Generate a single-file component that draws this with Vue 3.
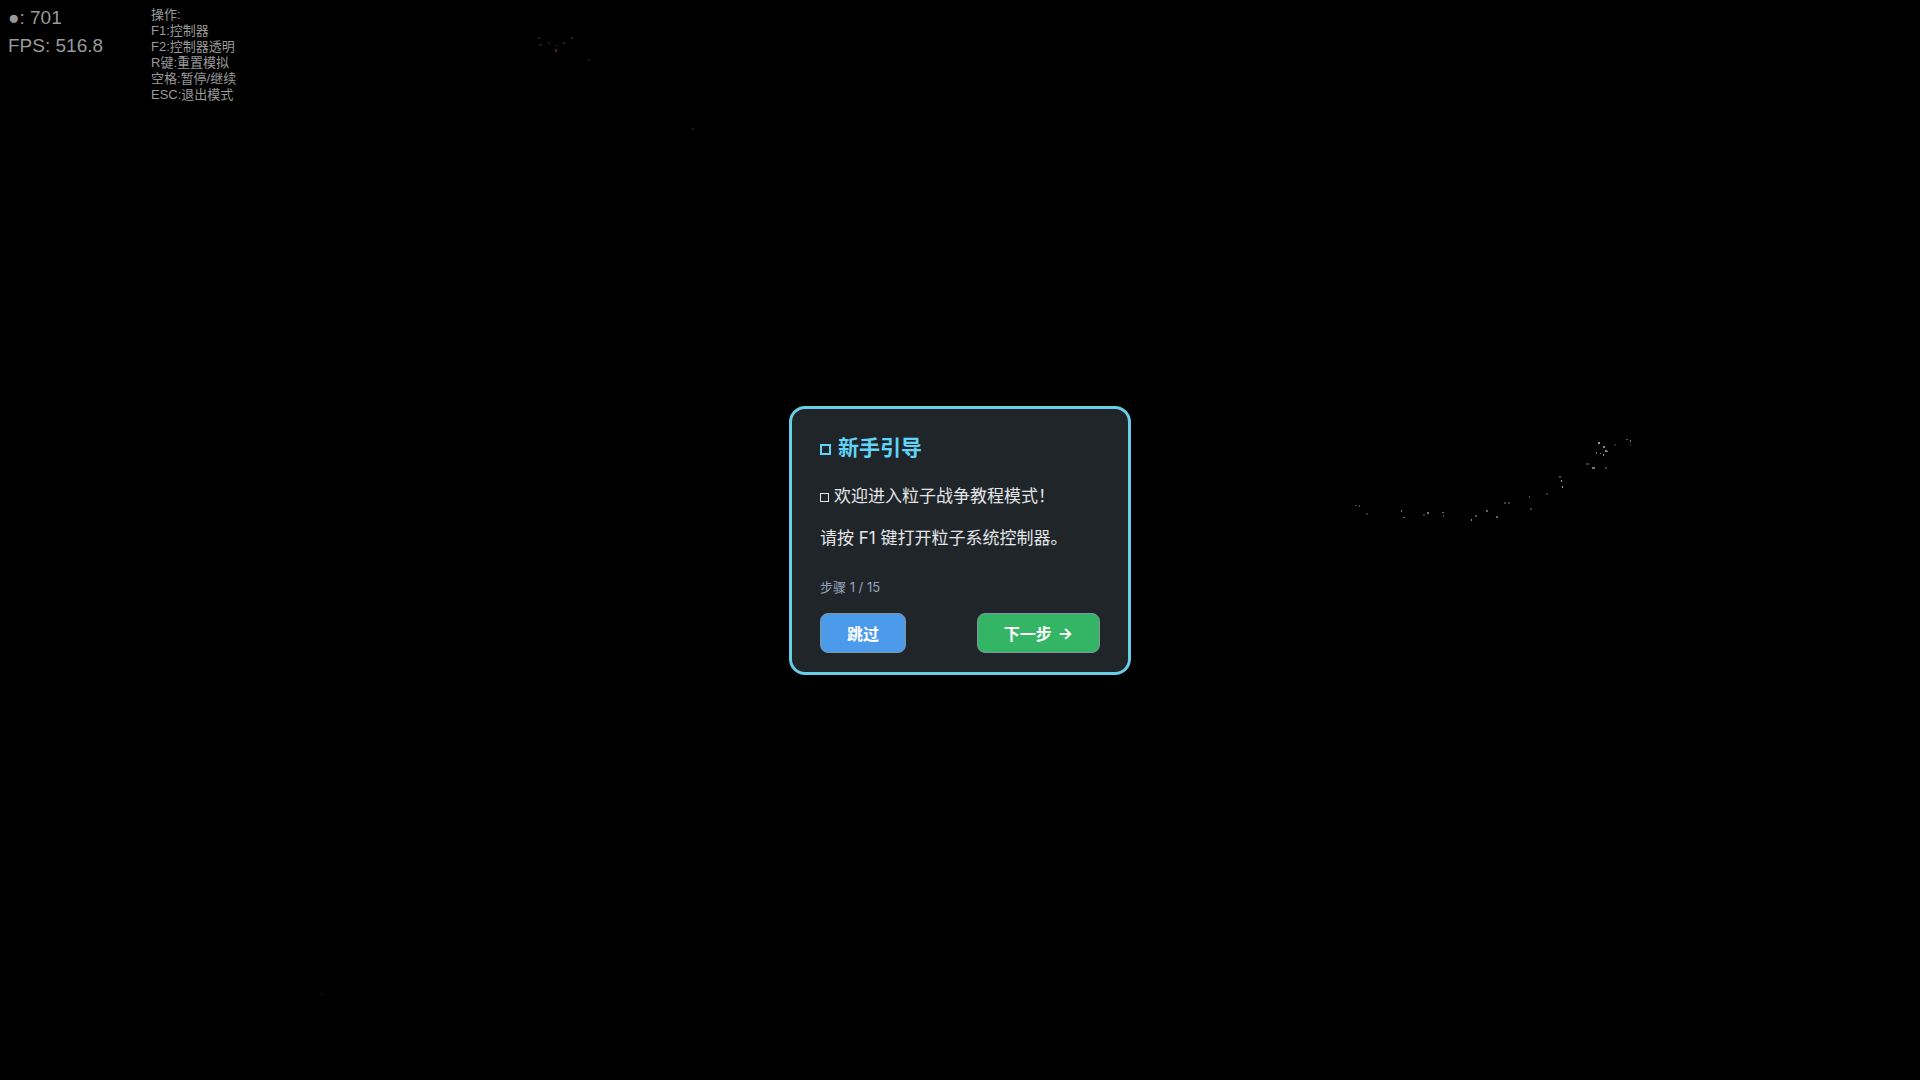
<template>
  <main class="stage">
    <svg class="particles" aria-hidden="true">
      <rect
        v-for="(p, index) in particles"
        :key="index"
        :x="p[0]"
        :y="p[1]"
        :width="p[2]"
        :height="p[3]"
        :fill="p[4]"
      />
    </svg>

    <header class="hud">
      <div class="stats">
        <div>●: {{ count }}</div>
        <div>FPS: {{ fps }}</div>
      </div>
      <div class="keys">
        <div v-for="line in keys" :key="line">{{ line }}</div>
      </div>
    </header>

    <section class="guide" v-if="visible">
      <h2 class="title"><span class="box"></span>新手引导</h2>
      <p class="text"><span class="box"></span>欢迎进入粒子战争教程模式！</p>
      <p class="text">请按 F1 键打开粒子系统控制器。</p>
      <div class="step">步骤 {{ step }} / {{ total }}</div>
      <div class="actions">
        <button type="button" class="btn skip" @click="visible = false">跳过</button>
        <button type="button" class="btn next" @click="nextStep">
          <span>下一步</span><span>→</span>
        </button>
      </div>
    </section>
  </main>
</template>

<script setup>
import { ref } from "vue"

const count = ref(701)
const fps = ref("516.8")
const step = ref(1)
const total = 15
const visible = ref(true)

const keys = [
  "操作:",
  "F1:控制器",
  "F2:控制器透明",
  "R键:重置模拟",
  "空格:暂停/继续",
  "ESC:退出模式",
]

// x, y, width, height, color
const particles = [
  [1355, 505, 2, 1, "#444"],
  [1359, 505, 1, 2, "#555"],
  [1366, 513, 2, 2, "#333"],
  [1401, 510, 1, 2, "#777"],
  [1403, 517, 2, 1, "#666"],
  [1423, 514, 2, 2, "#333"],
  [1427, 512, 2, 2, "#777"],
  [1442, 512, 2, 1, "#666"],
  [1443, 515, 1, 2, "#444"],
  [1471, 519, 1, 2, "#888"],
  [1475, 515, 2, 2, "#555"],
  [1486, 510, 2, 2, "#666"],
  [1496, 516, 2, 2, "#666"],
  [1504, 502, 2, 2, "#444"],
  [1508, 502, 2, 2, "#444"],
  [1529, 496, 1, 2, "#555"],
  [1530, 508, 2, 2, "#3a3a3a"],
  [1546, 493, 2, 2, "#333"],
  [1559, 476, 2, 2, "#444"],
  [1561, 480, 1, 2, "#999"],
  [1562, 486, 1, 2, "#999"],
  [1586, 463, 3, 2, "#3a3a3a"],
  [1592, 467, 3, 2, "#777"],
  [1605, 467, 2, 2, "#444"],
  [1598, 442, 2, 2, "#999"],
  [1596, 452, 1, 2, "#777"],
  [1600, 453, 1, 1, "#888"],
  [1603, 446, 2, 2, "#888"],
  [1605, 450, 2, 2, "#888"],
  [1603, 454, 1, 2, "#999"],
  [1607, 451, 1, 1, "#777"],
  [1614, 444, 2, 2, "#2a2a2a"],
  [1626, 439, 2, 1, "#555"],
  [1630, 440, 1, 2, "#777"],
  [1630, 444, 1, 1, "#444"],
  [538, 37, 2, 2, "#222"],
  [539, 44, 3, 2, "#2a1818"],
  [548, 42, 2, 2, "#251515"],
  [553, 37, 2, 1, "#1c1010"],
  [555, 49, 2, 3, "#4a2424"],
  [555, 45, 4, 1, "#221414"],
  [563, 42, 2, 2, "#3a1e1e"],
  [571, 37, 2, 2, "#3a1e1e"],
  [581, 51, 2, 1, "#1c1010"],
  [587, 59, 3, 2, "#161010"],
  [691, 128, 3, 2, "#151515"],
  [321, 993, 3, 2, "#0d0d0d"],
]

function nextStep() {
  if (step.value < total) {
    step.value++
  }
}
</script>

<style>
body {
  background: #000;
}
</style>

<style scoped>
.stage {
  position: relative;
  min-height: 100vh;
  display: flex;
  align-items: center;
  justify-content: center;
  background: #000;
  overflow: hidden;
}
.particles {
  position: absolute;
  top: 0;
  left: 0;
  width: 100%;
  height: 100%;
}
.hud {
  position: absolute;
  top: 4px;
  left: 8px;
  display: flex;
  color: #999;
  font-family: "Liberation Sans", "Noto Sans CJK SC", sans-serif;
}
.stats {
  width: 143px;
  font-size: 19px;
  line-height: 28px;
}
.keys {
  padding-top: 3px;
  font-size: 13px;
  line-height: 16px;
}
.guide {
  position: relative;
  box-sizing: border-box;
  width: 342px;
  padding: 24px 28px 19px;
  border: 3px solid #68cde6;
  border-radius: 16px;
  background: #20252a;
  font-family: Inter, "Noto Sans CJK SC", sans-serif;
}
.title {
  margin: 0 0 20px;
  color: #61d4f8;
  font-size: 21px;
  line-height: 30px;
  font-weight: 700;
}
.text {
  margin: 0 0 16px;
  color: #e4e6e8;
  font-size: 17px;
  line-height: 26px;
}
.box {
  display: inline-block;
  box-sizing: border-box;
  width: 9px;
  height: 9px;
  margin-right: 5px;
  border: 1px solid currentColor;
}
.title .box {
  width: 11px;
  height: 11px;
  margin-right: 7px;
  border-width: 2px;
}
.step {
  margin-top: 26px;
  color: #94a3bf;
  font-size: 13px;
  line-height: 20px;
}
.actions {
  display: flex;
  justify-content: space-between;
  margin-top: 16px;
}
.btn {
  display: flex;
  align-items: center;
  gap: 6px;
  height: 40px;
  padding: 0 26px;
  border: 1px solid #7f96a0;
  border-radius: 8px;
  color: #fff;
  font-family: inherit;
  font-size: 16px;
  font-weight: 700;
  cursor: pointer;
}
.skip {
  background: #4c9aea;
}
.next {
  background: #34b566;
}
</style>
